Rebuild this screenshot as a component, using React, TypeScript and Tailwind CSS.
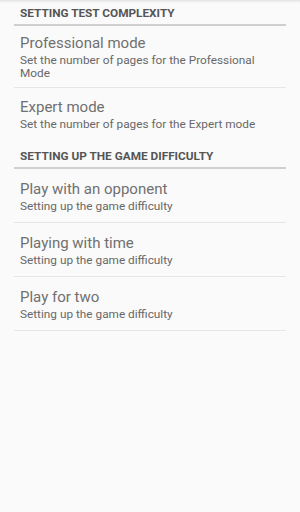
const sections = [
  {
    title: "SETTING TEST COMPLEXITY",
    items: [
      {
        title: "Professional mode",
        summary: "Set the number of pages for the Professional Mode",
        border: true,
      },
      {
        title: "Expert mode",
        summary: "Set the number of pages for the Expert mode",
        border: false,
      },
    ],
  },
  {
    title: "SETTING UP THE GAME DIFFICULTY",
    items: [
      { title: "Play with an opponent", summary: "Setting up the game difficulty", border: true },
      { title: "Playing with time", summary: "Setting up the game difficulty", border: true },
      { title: "Play for two", summary: "Setting up the game difficulty", border: true },
    ],
  },
];

export default function App() {
  return (
    <div className="min-h-[512px] w-[300px] bg-[#fafafa] font-['Roboto',sans-serif] shadow-[inset_0_3px_3px_-2px_rgba(0,0,0,0.12)]">
      <div className="px-[14px]">
        {sections.map((s, si) => (
          <div key={s.title}>
            <div
              className={
                (si === 0 ? "pt-[6px]" : "pt-[11px]") +
                " border-b-2 border-[#cfcfcf] px-[6px] pb-[4px] text-[11.8px] font-bold leading-[14px] text-[#555555]"
              }
            >
              {s.title}
            </div>
            {s.items.map((item, ii) => (
              <div
                key={item.title}
                className={
                  (si === 0
                    ? ii === 0
                      ? "pt-[6px] pb-[7px]"
                      : "pt-[8px] pb-[7px]"
                    : "pt-[10px] pb-[9px]") +
                  " pl-[6px] pr-[12px] " +
                  (item.border ? "border-b border-[#e6e6e6]" : "")
                }
              >
                <div
                  className={
                    (si === 0 ? "leading-[22px]" : "leading-[21px]") +
                    " text-[15px] text-[#707070]"
                  }
                >
                  {item.title}
                </div>
                <div className="text-[11.8px] leading-[13px] text-[#686868]">{item.summary}</div>
              </div>
            ))}
          </div>
        ))}
      </div>
    </div>
  );
}
